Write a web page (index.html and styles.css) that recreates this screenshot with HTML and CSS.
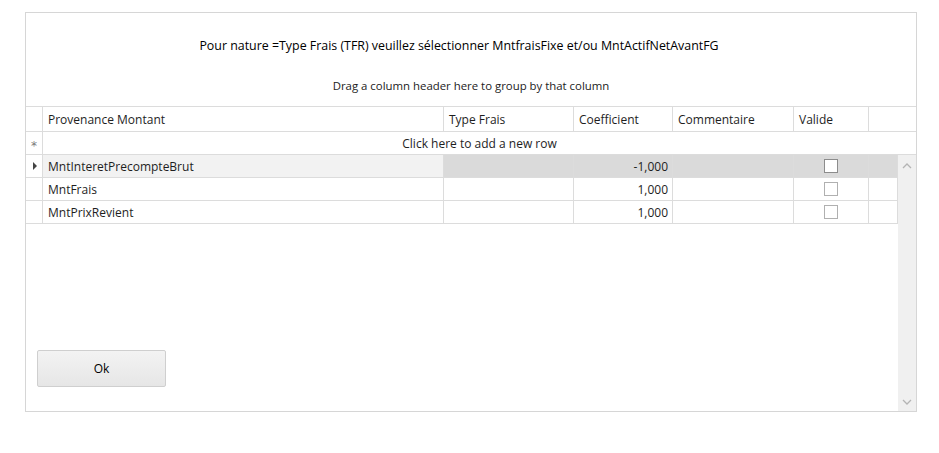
FILE: index.html
```html
<!DOCTYPE html>
<html lang="fr">
<head>
    <meta charset="UTF-8">
    <title>Provenance Montant</title>
    <link rel="stylesheet" href="styles.css">
</head>
<body>
    <div class="dialog">
        <div class="message">Pour nature =Type Frais (TFR) veuillez sélectionner MntfraisFixe et/ou MntActifNetAvantFG</div>
        <div class="group-panel">Drag a column header here to group by that column</div>

        <div class="grid-header">
            <div class="cell ind"></div>
            <div class="cell c-prov">Provenance Montant</div>
            <div class="cell c-type">Type Frais</div>
            <div class="cell c-coef">Coefficient</div>
            <div class="cell c-comm">Commentaire</div>
            <div class="cell c-val head-left">Valide</div>
            <div class="cell c-fill"></div>
        </div>
        <div class="new-row">
            <div class="cell ind"><span class="star">*</span></div>
            <div class="cell new-text">Click here to add a new row</div>
        </div>

        <div class="grid-body">
            <div class="rows">
                <div class="row current">
                    <div class="cell ind"><span class="arrow"></span></div>
                    <div class="cell c-prov">MntInteretPrecompteBrut</div>
                    <div class="cell c-type"></div>
                    <div class="cell c-coef num">-1,000</div>
                    <div class="cell c-comm"></div>
                    <div class="cell c-val"><span class="check"></span></div>
                    <div class="cell c-last"></div>
                </div>
                <div class="row">
                    <div class="cell ind"></div>
                    <div class="cell c-prov">MntFrais</div>
                    <div class="cell c-type"></div>
                    <div class="cell c-coef num">1,000</div>
                    <div class="cell c-comm"></div>
                    <div class="cell c-val"><span class="check"></span></div>
                    <div class="cell c-last"></div>
                </div>
                <div class="row">
                    <div class="cell ind"></div>
                    <div class="cell c-prov">MntPrixRevient</div>
                    <div class="cell c-type"></div>
                    <div class="cell c-coef num">1,000</div>
                    <div class="cell c-comm"></div>
                    <div class="cell c-val"><span class="check"></span></div>
                    <div class="cell c-last"></div>
                </div>

                <div class="actions">
                    <button class="btn">Ok</button>
                </div>
            </div>
            <div class="scrollbar">
                <svg width="10" height="6" viewBox="0 0 10 6"><polyline points="1,5 5,1 9,5" fill="none" stroke="#b4b4b4" stroke-width="1.3"/></svg>
                <svg width="10" height="6" viewBox="0 0 10 6"><polyline points="1,1 5,5 9,1" fill="none" stroke="#b4b4b4" stroke-width="1.3"/></svg>
            </div>
        </div>
    </div>
</body>
</html>
```

FILE: styles.css
```css
body {
    margin: 0;
    background-color: #fff;
    font-family: "Segoe UI", "Open Sans", "Noto Sans", sans-serif;
    font-size: 12px;
    color: #1e1e1e;
}
.dialog {
    box-sizing: border-box;
    width: 892px;
    height: 400px;
    margin: 12px 0 0 25px;
    border: 1px solid #d6d6d6;
    display: flex;
    flex-direction: column;
}
.message {
    height: 56px;
    display: flex;
    align-items: center;
    justify-content: center;
    padding: 8px 24px 0 0;
    box-sizing: border-box;
    font-size: 12.4px;
    color: #000;
}
.group-panel {
    height: 37px;
    display: flex;
    align-items: center;
    justify-content: center;
    padding-bottom: 4px;
    box-sizing: border-box;
    font-size: 11.4px;
    color: #222;
}
.grid-header,
.new-row,
.row {
    display: flex;
    border-bottom: 1px solid #dcdcdc;
}
.grid-header {
    border-top: 1px solid #dcdcdc;
    height: 24px;
}
.new-row {
    height: 22px;
}
.row {
    height: 22px;
}
.cell {
    box-sizing: border-box;
    border-right: 1px solid #dcdcdc;
    display: flex;
    align-items: center;
    padding: 0 5px;
    white-space: nowrap;
}
.ind {
    width: 17px;
    padding: 0;
    justify-content: center;
}
.c-prov { width: 401px; }
.c-type { width: 130px; }
.c-coef { width: 99px; }
.c-comm { width: 121px; }
.c-val { width: 75px; justify-content: center; }
.c-val.head-left { justify-content: flex-start; }
.c-fill { flex: 1; border-right: none; }
.c-last { width: 29px; }
.num { justify-content: flex-end; padding-right: 4px; }
.new-text {
    flex: 1;
    justify-content: center;
    border-right: none;
}
.star {
    color: #7a7a7a;
    font-size: 12px;
    margin-top: 5px;
    font-family: "DejaVu Sans", sans-serif;
}
.arrow {
    width: 0;
    height: 0;
    border-top: 4px solid transparent;
    border-bottom: 4px solid transparent;
    border-left: 4px solid #444;
    margin-left: 1px;
}
.row.current .c-prov { background-color: #f2f2f2; }
.row.current .c-type,
.row.current .c-coef,
.row.current .c-comm,
.row.current .c-val,
.row.current .c-last { background-color: #dadada; }
.check {
    width: 12px;
    height: 12px;
    border: 1px solid #b0b0b0;
    background-color: #fff;
}
.row.current .check { border-color: #8c8c8c; }
.grid-body {
    flex: 1;
    display: flex;
}
.rows {
    flex: 1;
    display: flex;
    flex-direction: column;
}
.actions {
    margin-top: auto;
    padding: 0 0 24px 11px;
}
.btn {
    width: 129px;
    height: 37px;
    border: 1px solid #cfcfcf;
    border-radius: 2px;
    background: linear-gradient(#f3f3f3, #e6e6e6);
    font-family: inherit;
    font-size: 12px;
    color: #000;
}
.scrollbar {
    width: 18px;
    background-color: #f0f0f0;
    display: flex;
    flex-direction: column;
    justify-content: space-between;
    align-items: center;
    padding: 8px 0 6px;
    box-sizing: border-box;
}
```
